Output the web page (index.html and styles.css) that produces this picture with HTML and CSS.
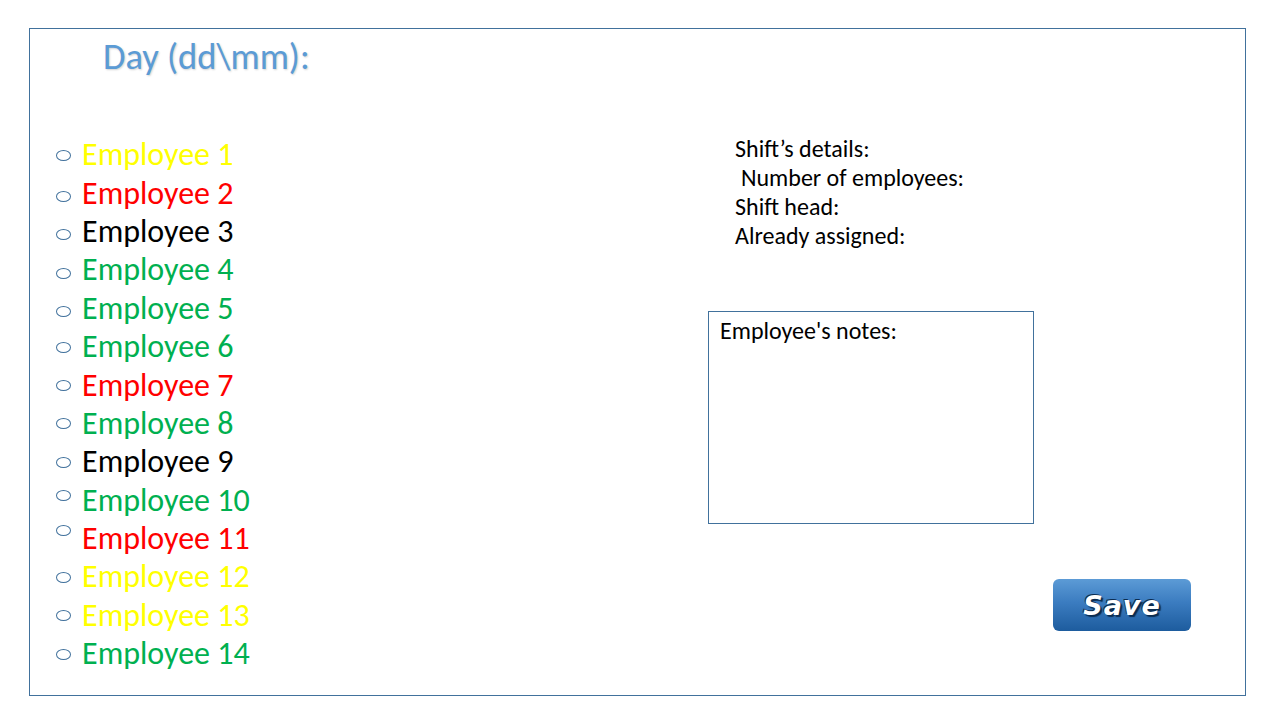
FILE: index.html
```html
<!DOCTYPE html>
<html>
<head>
<meta charset="utf-8">
<link rel="stylesheet" href="styles.css">
</head>
<body>
<div class="frame">
  <header class="header">
    <h1 class="title">Day (dd\mm):</h1>
  </header>
  <main class="main">
    <ul class="employees">
      <li class="emp yellow"><span class="radio"></span>Employee 1</li>
      <li class="emp red"><span class="radio low"></span>Employee 2</li>
      <li class="emp black"><span class="radio low"></span>Employee 3</li>
      <li class="emp green"><span class="radio low"></span>Employee 4</li>
      <li class="emp green"><span class="radio low"></span>Employee 5</li>
      <li class="emp green"><span class="radio"></span>Employee 6</li>
      <li class="emp red"><span class="radio"></span>Employee 7</li>
      <li class="emp green"><span class="radio"></span>Employee 8</li>
      <li class="emp black"><span class="radio"></span>Employee 9</li>
      <li class="emp green"><span class="radio high"></span>Employee 10</li>
      <li class="emp red"><span class="radio higher"></span>Employee 11</li>
      <li class="emp yellow"><span class="radio"></span>Employee 12</li>
      <li class="emp yellow"><span class="radio"></span>Employee 13</li>
      <li class="emp green"><span class="radio"></span>Employee 14</li>
    </ul>
    <section class="side">
      <div class="details">
        <div class="line">Shift’s details:</div>
        <div class="line indent">Number of employees:</div>
        <div class="line">Shift head:</div>
        <div class="line">Already assigned:</div>
      </div>
      <div class="notes">Employee's notes:</div>
      <button class="save">Save</button>
    </section>
  </main>
</div>
</body>
</html>
```
FILE: styles.css
```css
* { box-sizing: border-box; }
html, body { margin: 0; padding: 0; background: #fff; }
body {
  font-family: "Carlito", "Lato", "Open Sans", sans-serif;
  color: #000;
  width: 1280px;
  height: 720px;
  overflow: hidden;
}
.frame {
  margin: 28px 0 0 29px;
  width: 1217px;
  height: 668px;
  border: 1px solid #41719c;
  padding: 0 0 0 26px;
}
.header {
  height: 107px;
  padding: 6px 0 0 47px;
}
.title {
  margin: 0;
  font-weight: normal;
  font-size: 36.5px;
  line-height: 44px;
  color: #5b9bd5;
  text-shadow: 1px 1px 2px rgba(0,0,0,0.18);
}
.main {
  display: flex;
  align-items: flex-start;
}
.employees {
  list-style: none;
  margin: 0;
  padding: 0;
  width: 652px;
}
.emp {
  display: flex;
  align-items: center;
  height: 38.4px;
  font-size: 32px;
  line-height: 38px;
}
.radio {
  width: 15px;
  height: 11px;
  border: 1px solid #41719c;
  border-radius: 50%;
  margin-right: 11px;
  flex: none;
}
.radio.low { position: relative; top: 3px; }
.radio.high { position: relative; top: -5px; }
.radio.higher { position: relative; top: -9px; }
.yellow { color: #ffff00; }
.red { color: #ff0000; }
.black { color: #000; }
.green { color: #00b050; }
.side {
  display: flex;
  flex-direction: column;
  align-items: flex-start;
  margin-top: -2px;
}
.details {
  padding-left: 27px;
  font-size: 24px;
}
.line { height: 29px; line-height: 29px; }
.indent { padding-left: 6px; }
.notes {
  margin-top: 61px;
  width: 326px;
  height: 213px;
  border: 1px solid #41719c;
  padding: 5px 0 0 11px;
  font-size: 24px;
  line-height: 28px;
}
.save {
  margin: 55px 0 0 345px;
  width: 138px;
  height: 52px;
  border: none;
  border-radius: 6px;
  background: linear-gradient(to bottom, #5c9bd6 0%, #3b7cc0 45%, #1d5c9e 100%);
  color: #fff;
  font-family: "DejaVu Sans", sans-serif;
  font-weight: bold;
  font-style: italic;
  font-size: 27px;
  letter-spacing: 1px;
  text-shadow: 2px 2px 1px #0b2c50, -1px -1px 0 #0b2c50;
  padding: 0;
}
```
